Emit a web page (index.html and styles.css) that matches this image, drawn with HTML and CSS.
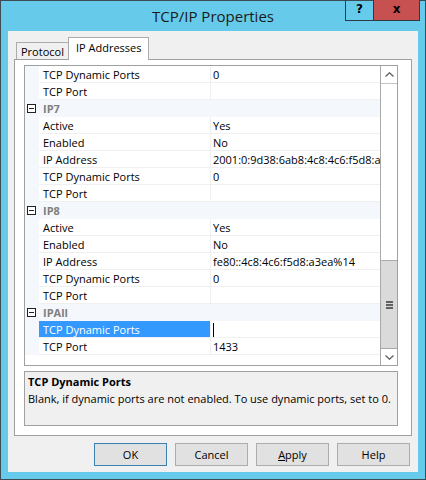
FILE: index.html
```html
<!DOCTYPE html>
<html lang="en">
<head>
  <meta charset="UTF-8" />
  <meta name="viewport" content="width=device-width, initial-scale=1.0"/>
  <title>TCP/IP Properties</title>
  <link rel="stylesheet" href="styles.css">
</head>
<body>

  <div class="window">
    <div class="titlebar">
      TCP/IP Properties
      <div class="caption-buttons">
        <div class="cap-help">?</div>
        <div class="cap-close">x</div>
      </div>
    </div>

    <div class="client">
      <div class="tabs">
        <div class="tab">Protocol</div>
        <div class="tab active">IP Addresses</div>
      </div>

      <div class="panel">
        <div class="grid">
          <div class="rows">
            <div class="row"><span class="margin"></span><span class="name">TCP Dynamic Ports</span><span class="value">0</span></div>
            <div class="row"><span class="margin"></span><span class="name">TCP Port</span><span class="value"></span></div>

            <div class="row cat"><span class="margin"><span class="minus"></span></span><span class="name">IP7</span></div>
            <div class="row"><span class="margin"></span><span class="name">Active</span><span class="value">Yes</span></div>
            <div class="row"><span class="margin"></span><span class="name">Enabled</span><span class="value">No</span></div>
            <div class="row"><span class="margin"></span><span class="name">IP Address</span><span class="value">2001:0:9d38:6ab8:4c8:4c6:f5d8:a3ea</span></div>
            <div class="row"><span class="margin"></span><span class="name">TCP Dynamic Ports</span><span class="value">0</span></div>
            <div class="row"><span class="margin"></span><span class="name">TCP Port</span><span class="value"></span></div>

            <div class="row cat"><span class="margin"><span class="minus"></span></span><span class="name">IP8</span></div>
            <div class="row"><span class="margin"></span><span class="name">Active</span><span class="value">Yes</span></div>
            <div class="row"><span class="margin"></span><span class="name">Enabled</span><span class="value">No</span></div>
            <div class="row"><span class="margin"></span><span class="name">IP Address</span><span class="value">fe80::4c8:4c6:f5d8:a3ea%14</span></div>
            <div class="row"><span class="margin"></span><span class="name">TCP Dynamic Ports</span><span class="value">0</span></div>
            <div class="row"><span class="margin"></span><span class="name">TCP Port</span><span class="value"></span></div>

            <div class="row cat"><span class="margin"><span class="minus"></span></span><span class="name">IPAll</span></div>
            <div class="row selected"><span class="margin"></span><span class="name">TCP Dynamic Ports</span><span class="value"><span class="caret"></span></span></div>
            <div class="row"><span class="margin"></span><span class="name">TCP Port</span><span class="value">1433</span></div>
          </div>

          <div class="scrollbar">
            <div class="sb-btn sb-up">
              <svg width="9" height="5" viewBox="0 0 9 5"><polyline points="0.5,4.5 4.5,0.8 8.5,4.5" fill="none" stroke="#606060" stroke-width="1.3"/></svg>
            </div>
            <div class="sb-track">
              <div class="sb-thumb">
                <svg width="7" height="8" viewBox="0 0 7 8"><rect x="0" y="0" width="7" height="2" fill="#606060"/><rect x="0" y="3" width="7" height="2" fill="#606060"/><rect x="0" y="6" width="7" height="2" fill="#606060"/></svg>
              </div>
            </div>
            <div class="sb-btn sb-down">
              <svg width="9" height="5" viewBox="0 0 9 5"><polyline points="0.5,0.5 4.5,4.2 8.5,0.5" fill="none" stroke="#606060" stroke-width="1.3"/></svg>
            </div>
          </div>
        </div>

        <div class="description">
          <div class="desc-title">TCP Dynamic Ports</div>
          <div>Blank, if dynamic ports are not enabled. To use dynamic ports, set to 0.</div>
        </div>
      </div>

      <div class="dialog-buttons">
        <button class="default">OK</button>
        <button>Cancel</button>
        <button><span class="accel">A</span>pply</button>
        <button>Help</button>
      </div>
    </div>
  </div>

</body>
</html>
```

FILE: styles.css
```css
body {
  margin: 0;
  font-family: "Open Sans", "Noto Sans", sans-serif;
  font-size: 11px;
  color: #000;
}

.window {
  width: 426px;
  height: 480px;
  box-sizing: border-box;
  border: 1px solid #3d4c53;
  background-color: #66caea;
  display: flex;
  flex-direction: column;
}

/* title bar */
.titlebar {
  position: relative;
  height: 30px;
  line-height: 30px;
  text-align: center;
  font-size: 15px;
  color: #1a1a1a;
}

.caption-buttons {
  position: absolute;
  top: -1px;
  right: 5px;
  display: flex;
}

.cap-help, .cap-close {
  height: 21px;
  box-sizing: border-box;
  border: 1px solid #2e3b40;
  border-top: none;
  text-align: center;
  line-height: 19px;
  font-family: "DejaVu Sans", sans-serif;
  font-weight: bold;
  font-size: 12px;
  color: #000;
}

.cap-help {
  width: 29px;
}

.cap-close {
  width: 47px;
  margin-left: -1px;
  background-color: #c75050;
}

/* dialog client area */
.client {
  flex: 1;
  margin: 0 7px 7px;
  background-color: #f0f0f0;
  display: flex;
  flex-direction: column;
}

.tabs {
  display: flex;
  align-items: flex-end;
  height: 21px;
  margin: 7px 0 0 8px;
  position: relative;
  z-index: 1;
}

.tab {
  height: 16px;
  line-height: 17px;
  padding: 0 4px;
  border: 1px solid #acacac;
  border-bottom: none;
  background-color: #f0f0f0;
}

.tab.active {
  height: 22px;
  line-height: 19px;
  margin-bottom: -1px;
  margin-left: -1px;
  padding: 0 7px;
  background-color: #fff;
}

.panel {
  margin: 0 6px;
  height: 377px;
  box-sizing: border-box;
  border: 1px solid #a0a0a0;
  background-color: #fff;
  padding: 5px 13px 9px 9px;
}

/* property grid */
.grid {
  height: 301px;
  box-sizing: border-box;
  border: 1px solid #a0a0a0;
  display: flex;
}

.rows {
  flex: 1;
  overflow: hidden;
}

.row {
  display: flex;
  height: 17px;
  line-height: 18px;
}

.margin {
  width: 14px;
  flex: none;
  background-color: #f4f7fb;
  display: flex;
  align-items: center;
}

.name {
  width: 172px;
  flex: none;
  box-sizing: border-box;
  padding-left: 4px;
  border-bottom: 1px solid #f0f0f0;
  border-right: 1px solid #f0f0f0;
  white-space: nowrap;
}

.value {
  flex: 1;
  padding-left: 2px;
  border-bottom: 1px solid #f0f0f0;
  white-space: nowrap;
  overflow: hidden;
}

.row.cat {
  background-color: #f4f7fb;
}

.row.cat .name {
  border: none;
  color: #808080;
  font-weight: bold;
}

.minus {
  width: 9px;
  height: 9px;
  box-sizing: border-box;
  margin-left: 2px;
  border: 1px solid #222;
  background: #fff linear-gradient(#222, #222) no-repeat center / 5px 1px;
}

.row.selected .name {
  background-color: #3399ff;
  color: #fff;
}

.caret {
  display: inline-block;
  width: 1px;
  height: 14px;
  vertical-align: -3px;
  background-color: #000;
}

/* vertical scrollbar */
.scrollbar {
  width: 16px;
  flex: none;
  border-left: 1px solid #a9a9a9;
  display: flex;
  flex-direction: column;
}

.sb-btn {
  height: 17px;
  display: flex;
  align-items: center;
  justify-content: center;
}

.sb-up {
  height: 18px;
  box-sizing: border-box;
  border-bottom: 1px solid #c5c5c5;
}

.sb-down {
  box-sizing: border-box;
  border-top: 1px solid #a9a9a9;
}

.sb-track {
  flex: 1;
}

.sb-thumb {
  margin-top: 176px;
  height: 88px;
  box-sizing: border-box;
  border-top: 1px solid #a9a9a9;
  background-color: #dadada;
  display: flex;
  align-items: center;
  justify-content: center;
}

/* description pane */
.description {
  margin-top: 5px;
  height: 55px;
  box-sizing: border-box;
  border: 1px solid #a0a0a0;
  background-color: #f0f0f0;
  padding: 1px 3px 0;
  line-height: 17px;
}

.desc-title {
  font-weight: bold;
}

/* OK / Cancel / Apply / Help */
.dialog-buttons {
  display: flex;
  justify-content: flex-end;
  gap: 8px;
  margin: 7px 8px 0 0;
}

button {
  width: 73px;
  height: 23px;
  padding: 0;
  font-family: inherit;
  font-size: 11px;
  color: #000;
  background-color: #e1e1e1;
  border: 1px solid #adadad;
}

button.default {
  border-color: #3c7fb1;
}

.accel {
  text-decoration: underline;
}
```
